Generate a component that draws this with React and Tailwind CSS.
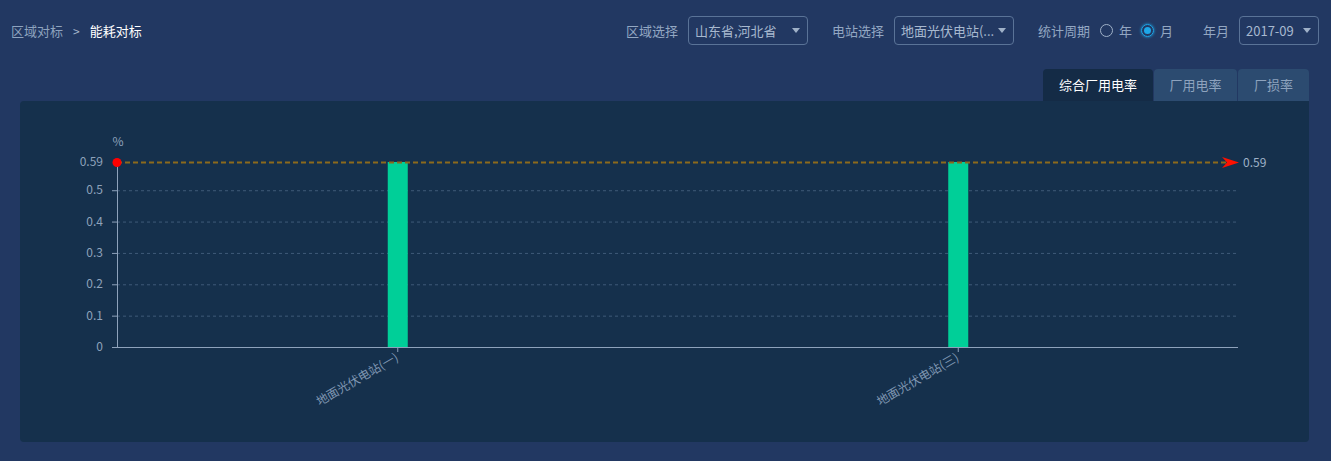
import React, { useState } from "react";

const font = { fontFamily: '"Noto Sans CJK SC", "Noto Sans", sans-serif' };

const Select = ({ value, width }) => (
  <div
    className={`h-[29px] ${width} flex items-center justify-between pl-[6px] pr-[7px] border border-[#5a7397] rounded-[4px] text-[13px] text-[#a7b8cf] whitespace-nowrap`}
  >
    <span>{value}</span>
    <span className="shrink-0 w-0 h-0 border-l-[4px] border-r-[4px] border-t-[5px] border-l-transparent border-r-transparent border-t-[#9fb1c8]" />
  </div>
);

const Radio = ({ checked, label, onClick }) => (
  <button onClick={onClick} className="flex items-center gap-[6px] text-[13px] text-[#93a7c2]">
    <span
      className={`w-[13px] h-[13px] rounded-full border flex items-center justify-center ${
        checked ? "border-[#1ea7e8] shadow-[0_0_3px_#1ea7e8]" : "border-[#9fb1c8]"
      }`}
    >
      {checked && <span className="w-[7px] h-[7px] rounded-full bg-[#1ea7e8]" />}
    </span>
    {label}
  </button>
);

const Chart = () => {
  const x0 = 97;
  const x1 = 1218;
  const yTop = 61;
  const yBot = 246;
  const toY = (v) => yBot - (v / 0.59) * (yBot - yTop);
  const ticks = [0, 0.1, 0.2, 0.3, 0.4, 0.5];
  const cats = ["地面光伏电站(一)", "地面光伏电站(三)"];
  const catW = (x1 - x0) / cats.length;

  return (
    <svg width="1289" height="341" className="block">
      <text x="98" y="45" fontSize="12" fill="#8ea2bb" textAnchor="middle">
        %
      </text>
      {ticks.map((t) => (
        <g key={t}>
          {t > 0 && (
            <line x1={x0} x2={x1} y1={toY(t) + 0.5} y2={toY(t) + 0.5} stroke="#3f5a78" strokeDasharray="3 3" />
          )}
          <line x1={x0 - 5} x2={x0} y1={toY(t) + 0.5} y2={toY(t) + 0.5} stroke="#8ea2bb" />
          <text x={x0 - 14} y={toY(t) + 4} fontSize="12" fill="#8ea2bb" textAnchor="end">
            {t}
          </text>
        </g>
      ))}
      <text x={x0 - 14} y={yTop + 4} fontSize="12" fill="#8ea2bb" textAnchor="end">
        0.59
      </text>
      <line x1={x0 + 0.5} x2={x0 + 0.5} y1={yTop} y2={yBot} stroke="#8ea2bb" />
      <line x1={x0} x2={x1} y1={yBot + 0.5} y2={yBot + 0.5} stroke="#8ea2bb" />

      {cats.map((c, i) => {
        const cx = x0 + catW * (i + 0.5);
        return (
          <g key={c}>
            <rect x={cx - 9.5} y={yTop} width="20" height={yBot - yTop} fill="#00cf98" />
            <line x1={cx + 0.5} x2={cx + 0.5} y1={yBot} y2={yBot + 5} stroke="#8ea2bb" />
            <text
              x={cx + 2}
              y={yBot + 13}
              fontSize="12"
              fill="#7f96b2"
              textAnchor="end"
              transform={`rotate(-30 ${cx + 2} ${yBot + 13})`}
            >
              {c}
            </text>
          </g>
        );
      })}

      <line x1={x0} x2={x1 - 10} y1={yTop + 0.5} y2={yTop + 0.5} stroke="#8c6a1c" strokeWidth="2" strokeDasharray="5 3" />
      <circle cx={x0} cy={yTop + 0.5} r="4.5" fill="#ff0000" />
      <path d={`M${x1 - 16} ${yTop - 5} L${x1 + 1} ${yTop + 0.5} L${x1 - 16} ${yTop + 6} L${x1 - 11} ${yTop + 0.5} Z`} fill="#ff1100" />
      <text x={x1 + 5} y={yTop + 4.5} fontSize="12" fill="#9fb2c8">
        0.59
      </text>
    </svg>
  );
};

const App = () => {
  const [period, setPeriod] = useState("month");
  const [tab, setTab] = useState(0);
  const tabs = [
    { label: "综合厂用电率", w: "w-[110px]" },
    { label: "厂用电率", w: "w-[83px]" },
    { label: "厂损率", w: "w-[71px]" },
  ];

  return (
    <div className="w-[1331px] h-[461px] bg-[#223862] overflow-hidden" style={font}>
      <div className="flex items-center justify-between pl-[11px] pr-[12px] pt-[16px] h-[45px]">
        <div className="flex items-center text-[13px]">
          <span className="text-[#8ea3be]">区域对标</span>
          <span className="mx-[10px] text-[#a6b6cb] text-[12px]">&gt;</span>
          <span className="text-white">能耗对标</span>
        </div>
        <div className="flex items-center text-[13px] text-[#93a7c2]">
          <span className="mr-[10px]">区域选择</span>
          <Select value="山东省,河北省" width="w-[120px]" />
          <span className="ml-[24px] mr-[10px]">电站选择</span>
          <Select value="地面光伏电站(..." width="w-[120px]" />
          <span className="ml-[24px] mr-[10px]">统计周期</span>
          <div className="flex items-center gap-[9px]">
            <Radio label="年" checked={period === "year"} onClick={() => setPeriod("year")} />
            <Radio label="月" checked={period === "month"} onClick={() => setPeriod("month")} />
          </div>
          <span className="ml-[30px] mr-[10px]">年月</span>
          <Select value="2017-09" width="w-[80px]" />
        </div>
      </div>

      <div className="flex justify-end pr-[22px] mt-[24px]">
        {tabs.map((t, i) => (
          <button
            key={t.label}
            onClick={() => setTab(i)}
            className={`${t.w} h-[32px] rounded-t-[4px] text-[13px] ${
              i > 0 ? "ml-px" : ""
            } ${tab === i ? "bg-[#142b46] text-white" : "bg-[#2c4b70] text-[#8ea3be]"}`}
          >
            {t.label}
          </button>
        ))}
      </div>

      <div className="mx-[20px] w-[1289px] h-[341px] bg-[#15304c] rounded-b-[4px] rounded-tl-[4px]">
        <Chart />
      </div>
    </div>
  );
};

export default App;
